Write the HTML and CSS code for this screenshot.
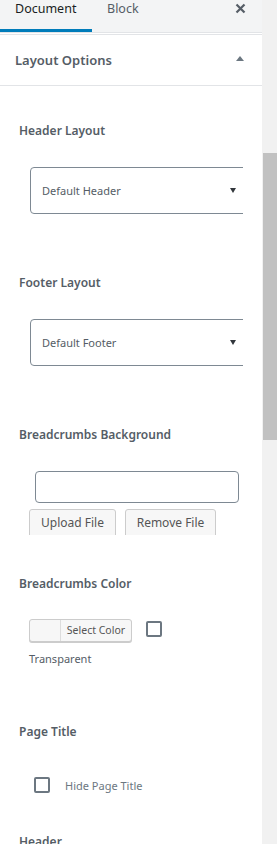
FILE: index.html
```html
<!DOCTYPE html>
<html lang="en">
<head>
  <meta charset="UTF-8">
  <meta name="viewport" content="width=device-width, initial-scale=1.0">
  <title>Document settings</title>
  <link rel="stylesheet" href="styles.css">
</head>
<body>
  <div class="sidebar">
    <div class="tabs">
      <span class="tab active">Document</span>
      <span class="tab">Block</span>
      <span class="close">
        <svg width="11" height="11" viewBox="0 0 11 11"><path d="M1.5 1.5l8 8M9.5 1.5l-8 8" stroke="#555d66" stroke-width="2.2" fill="none"/></svg>
      </span>
    </div>

    <div class="panel">
      <div class="panel-title">
        <span>Layout Options</span>
        <svg class="caret" width="8" height="5" viewBox="0 0 8 5"><path d="M0 5L4 0L8 5Z" fill="#6c7781"/></svg>
      </div>

      <div class="options">
        <div class="field">
          <div class="field-label">Header Layout</div>
          <div class="select-wrap">
            <div class="select"><span>Default Header</span><svg class="arrow" width="6" height="5" viewBox="0 0 6 5"><path d="M0 0H6L3 5Z" fill="#32373c"/></svg></div>
          </div>
        </div>

        <div class="field">
          <div class="field-label">Footer Layout</div>
          <div class="select-wrap">
            <div class="select"><span>Default Footer</span><svg class="arrow" width="6" height="5" viewBox="0 0 6 5"><path d="M0 0H6L3 5Z" fill="#32373c"/></svg></div>
          </div>
        </div>

        <div class="field">
          <div class="field-label">Breadcrumbs Background</div>
          <div class="file-input"></div>
          <div class="file-buttons">
            <span class="btn upload">Upload File</span>
            <span class="btn remove">Remove File</span>
          </div>
        </div>

        <div class="field field-color">
          <div class="field-label">Breadcrumbs Color</div>
          <div class="color-row">
            <span class="color-btn"><span class="swatch"></span><span class="color-text">Select Color</span></span>
            <span class="checkbox"></span>
          </div>
          <div class="hint">Transparent</div>
        </div>

        <div class="field field-title">
          <div class="field-label">Page Title</div>
          <label class="check-row">
            <span class="checkbox"></span>
            <span>Hide Page Title</span>
          </label>
        </div>

        <div class="field field-last">
          <div class="field-label">Header</div>
        </div>
      </div>
    </div>
  </div>

  <div class="scrollbar">
    <div class="thumb"></div>
  </div>
</body>
</html>
```

FILE: styles.css
```css
* {
  margin: 0;
  padding: 0;
  box-sizing: border-box;
}

body {
  display: flex;
  height: 844px;
  overflow: hidden;
  background: #fff;
  font-family: "Noto Sans", "Open Sans", sans-serif;
  color: #555d66;
}

.sidebar {
  width: 262px;
  height: 844px;
  overflow: hidden;
  background: #fff;
}

.tabs {
  display: flex;
  align-items: flex-start;
  height: 33px;
  background: #f3f4f5;
  border-bottom: 1px solid #e2e4e7;
}

.tab {
  height: 32px;
  padding: 0 15px;
  font-size: 12.5px;
  line-height: 17px;
  color: #555d66;
}

.tab.active {
  width: 92px;
  color: #191e23;
  box-shadow: inset 0 -3px #007cba;
}

.close {
  display: flex;
  margin: 3px 0 0 auto;
  padding-right: 16px;
}

.panel {
  margin-top: 1px;
  border-top: 1px solid #e2e4e7;
}

.panel-title {
  display: flex;
  align-items: center;
  justify-content: space-between;
  height: 51px;
  padding: 0 18px 0 15px;
  border-bottom: 1px solid #e2e4e7;
  font-size: 13px;
  font-weight: 600;
  color: #555d66;
}

.caret {
  margin-top: -4px;
}

.options {
  padding: 36px 0 0 19px;
}

.field + .field {
  margin-top: 60px;
}

.field-label {
  font-size: 12px;
  font-weight: 600;
  line-height: 18px;
  color: #555d66;
}

.select-wrap {
  width: 213px;
  margin: 27px 0 0 11px;
  overflow: hidden;
}

.select {
  display: flex;
  align-items: center;
  justify-content: space-between;
  width: 240px;
  height: 47px;
  padding: 0 33px 0 11px;
  border: 1px solid #7e8993;
  border-radius: 4px;
  font-size: 11px;
  color: #555d66;
}

.file-input {
  width: 204px;
  height: 32px;
  margin: 27px 0 0 16px;
  border: 1px solid #7e8993;
  border-radius: 4px;
}

.file-buttons {
  display: flex;
  gap: 9px;
  height: 26px;
  margin: 6px 0 0 10px;
  overflow: hidden;
}

.btn {
  height: 30px;
  padding-top: 4px;
  border: 1px solid #ccc;
  border-radius: 3px;
  background: #f7f7f7;
  font-size: 12px;
  line-height: 17px;
  color: #555;
  text-align: center;
}

.upload { width: 87px; }
.remove { width: 91px; }

.field-color {
  margin-top: 40px !important;
}

.color-row {
  display: flex;
  align-items: flex-start;
  margin: 26px 0 0 10px;
}

.color-btn {
  display: flex;
  width: 103px;
  height: 23px;
  border: 1px solid #ccc;
  border-radius: 3px;
  background: #f7f7f7;
  box-shadow: 0 1px 0 #ccc;
}

.swatch {
  width: 31px;
  border-right: 1px solid #ddd;
}

.color-text {
  flex: 1;
  font-size: 10.5px;
  line-height: 21px;
  text-align: center;
  color: #555;
}

.checkbox {
  display: block;
  width: 16px;
  height: 16px;
  border: 2px solid #6c7781;
  border-radius: 2px;
  background: #fff;
}

.color-row .checkbox {
  margin: 2px 0 0 14px;
}

.hint {
  margin: 8px 0 0 10px;
  font-size: 11px;
  line-height: 18px;
  color: #555d66;
}

.field-title {
  margin-top: 55px !important;
}

.check-row {
  display: flex;
  align-items: center;
  gap: 15px;
  margin: 36px 0 0 15px;
  font-size: 11px;
  color: #6c7781;
}

.field-last {
  margin-top: 40px !important;
}

.scrollbar {
  width: 15px;
  height: 844px;
  background: #f1f1f1;
  padding: 153px 0 0 1px;
}

.thumb {
  height: 287px;
  background: #c1c1c1;
}
```
